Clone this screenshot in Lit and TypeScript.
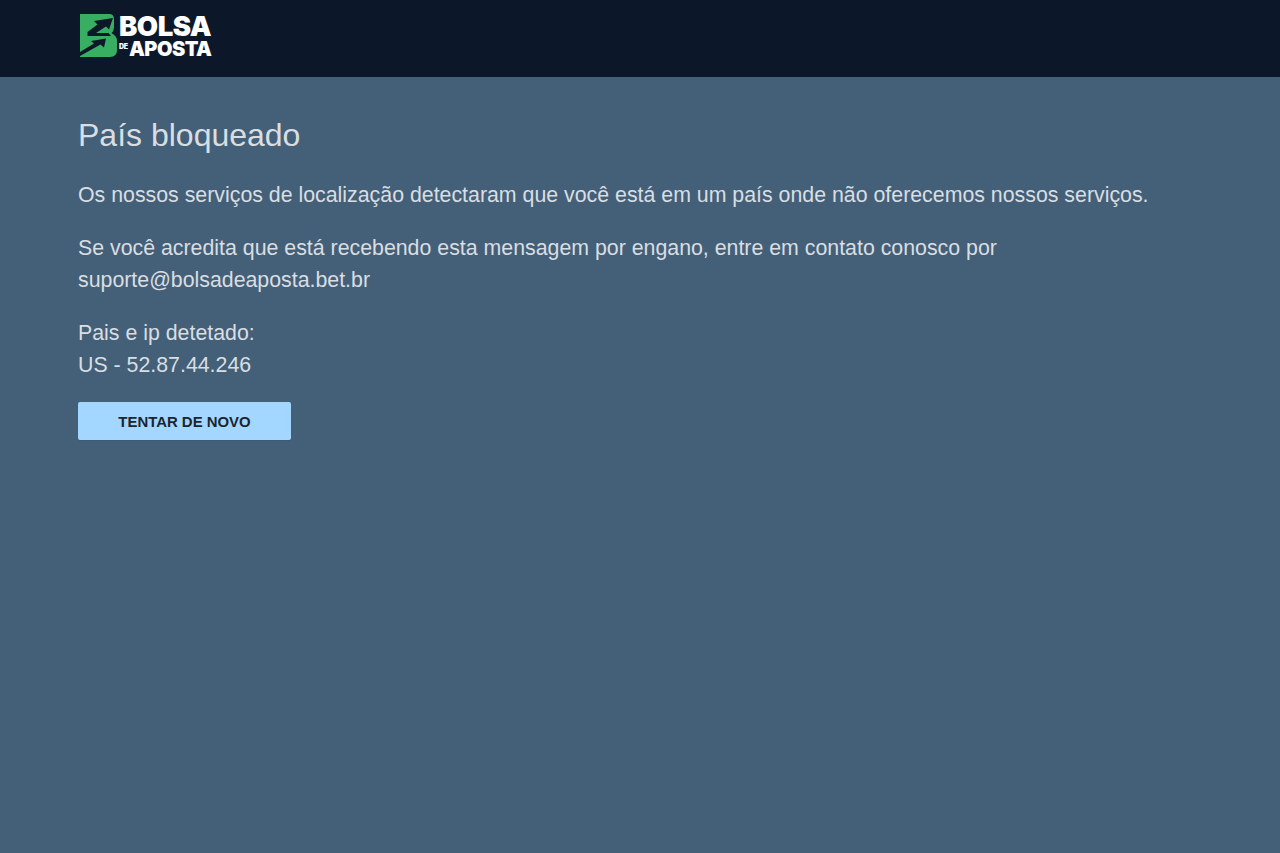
import { LitElement, html, css } from "lit";
import { customElement } from "lit/decorators.js";

@customElement("app-root")
export class AppRoot extends LitElement {
  static styles = css`
    :host {
      display: flex;
      flex-direction: column;
      min-height: 853px;
      background: #446078;
      font-family: "Liberation Sans", Arial, sans-serif;
      color: #d9dee2;
    }
    header {
      height: 77px;
      background: #0c182a;
      padding: 14px 0 0 80px;
      box-sizing: border-box;
      flex: none;
    }
    .logo { display: flex; align-items: flex-start; gap: 2px; height: 44px; }
    .mark { width: 37px; height: 43px; display: block; flex: none; }
    .words { display: flex; flex-direction: column; font-family: Inter, sans-serif; font-weight: 900; color: #fff; }
    .bolsa { font-size: 27.5px; line-height: 24px; height: 25px; letter-spacing: -0.5px; }
    .line2 { display: flex; align-items: center; line-height: 20px; height: 20px; }
    .de { font-size: 7px; width: 10px; line-height: 8px; letter-spacing: -0.3px; margin-top: -5px; }
    .aposta { font-size: 20px; letter-spacing: -0.55px; }
    main { padding: 40px 78px 0; }
    h1 { margin: 0 0 26px; font-size: 32px; line-height: 36px; font-weight: 400; color: #d9dee2; }
    p { margin: 0 0 21px; font-size: 21.33px; line-height: 32px; color: #d9dee2; }
    button {
      display: block;
      width: 213px;
      height: 38px;
      border: 0;
      border-radius: 2px;
      padding: 1px 0 0;
      background: #a4d7ff;
      color: #1a2530;
      font: 700 14.93px/37px "Liberation Sans", Arial, sans-serif;
      box-shadow: 0 1px 1px rgba(0, 0, 0, 0.08);
    }
  `;

  render() {
    return html`
      <header>
        <div class="logo">
          <svg class="mark" viewBox="0 0 37 43" aria-hidden="true">
            <path fill="#38ae62" d="M0 0H29Q34 0 34 5V13Q34 17 31.5 19Q37 22 37 27V36Q37 43 30 43H0Z"/>
            <path fill="#0c182a" d="M33 4L14 7L17.5 10.5L7.5 18V22H31L28.5 19H16L26 12.5L29 15.5Z"/>
            <path fill="#0c182a" d="M0 38L14 29.5L11 27L26 24.5L24 33.5L20.5 30.5L0 42Z"/>
          </svg>
          <div class="words">
            <div class="bolsa">BOLSA</div>
            <div class="line2"><span class="de">DE</span><span class="aposta">APOSTA</span></div>
          </div>
        </div>
      </header>
      <main>
        <h1>País bloqueado</h1>
        <p>Os nossos serviços de localização detectaram que você está em um país onde não oferecemos nossos serviços.</p>
        <p>Se você acredita que está recebendo esta mensagem por engano, entre em contato conosco por<br />suporte@bolsadeaposta.bet.br</p>
        <p>Pais e ip detetado:<br />US - 52.87.44.246</p>
        <button type="button">TENTAR DE NOVO</button>
      </main>
    `;
  }
}
